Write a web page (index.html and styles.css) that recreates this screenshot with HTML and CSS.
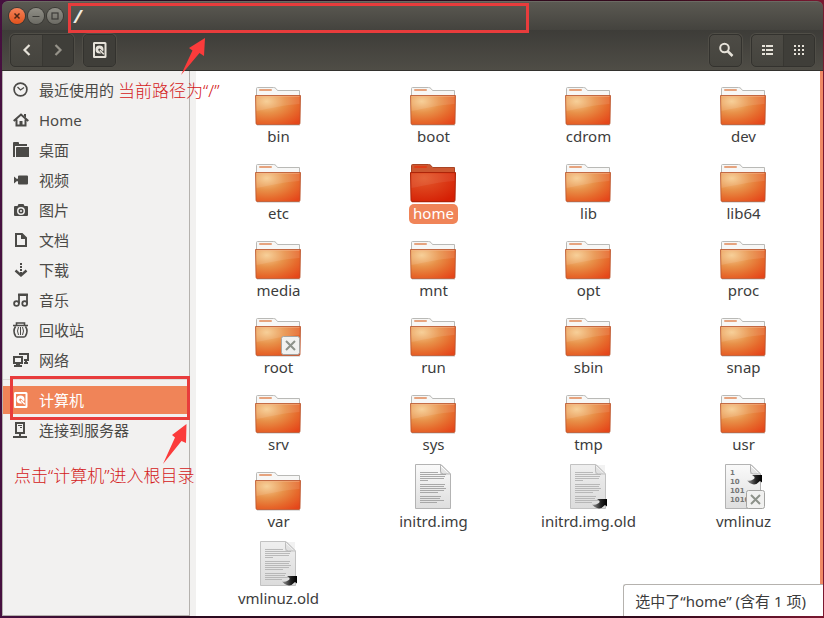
FILE: index.html
```html
<!DOCTYPE html>
<html lang="zh-CN">
<head>
<meta charset="utf-8">
<title>/</title>
<link rel="stylesheet" href="styles.css">
</head>
<body>
<svg class="defs" aria-hidden="true">
  <defs>
    <radialGradient id="orange" cx="0.25" cy="0.2" r="1">
      <stop offset="0" stop-color="#f6cb8e"/>
      <stop offset="0.4" stop-color="#e89149"/>
      <stop offset="0.7" stop-color="#e66a2c"/>
      <stop offset="1" stop-color="#e5461a"/>
    </radialGradient>
    <radialGradient id="red" cx="0.3" cy="0.2" r="0.9">
      <stop offset="0" stop-color="#e2592b"/>
      <stop offset="1" stop-color="#d51f04"/>
    </radialGradient>
    <linearGradient id="paper" x1="0" y1="0" x2="0" y2="1">
      <stop offset="0" stop-color="#fafafa"/>
      <stop offset="1" stop-color="#dedede"/>
    </linearGradient>
    <linearGradient id="link" x1="0" y1="0" x2="1" y2="0">
      <stop offset="0" stop-color="#999"/>
      <stop offset="0.6" stop-color="#222"/>
      <stop offset="1" stop-color="#000"/>
    </linearGradient>
  </defs>
  <symbol id="folder" viewBox="0 0 47 48">
    <path d="M1.500 18V9.500Q1.500 8.500 2.500 8.500H18.500Q20 8.500 21 9.500L22.500 11.500H44.500V18Z" fill="#f7f7f6" stroke="#b9b9b6"/>
    <rect x="4" y="10" width="13" height="2" rx="1" fill="#e6a37e"/>
    <path d="M0.500 16.500H45.500L45 44Q45 45.500 44 45.500H2Q1 45.500 1 44Z" fill="url(#orange)" stroke="#b8532a" stroke-opacity="0.800"/>
    <path d="M1.500 17.500H44.500V25C30 26 17 29 1.500 32Z" fill="#fff" opacity="0.100"/>
    <path d="M1.500 17.500H44.500" stroke="#f6bc92" opacity="0.500"/>
    <path d="M2 46.500H45" stroke="#000" opacity="0.120"/>
  </symbol>
  <symbol id="folder-selected" viewBox="0 0 47 48">
    <path d="M1.500 18V9.500Q1.500 8.500 2.500 8.500H18.500Q20 8.500 21 9.500L22.500 11.500H44.500V18Z" fill="#cc5730" stroke="#a94424"/>
    <rect x="4" y="10" width="13" height="2" rx="1" fill="#e03c15"/>
    <path d="M0.500 16.500H45.500L45 44Q45 45.500 44 45.500H2Q1 45.500 1 44Z" fill="url(#red)" stroke="#ad2409"/>
    <path d="M1.500 17.500H44.500V25C30 26 17 29 1.500 32Z" fill="#fff" opacity="0.070"/>
    <path d="M2 46.500H45" stroke="#d21c00" opacity="0.250"/>
  </symbol>
  <symbol id="page" viewBox="0 0 47 48">
    <path d="M5.500 0.500H31L40.500 10V44.500H5.500Z" fill="url(#paper)" stroke="#b3b3b3"/>
    <path d="M30.500 0.500V7Q30.500 10 33.500 10H40.500Z" fill="#fff" stroke="#b9b9b9"/>
    <path d="M30 2V10H39Z" fill="#999" opacity="0.250"/>
  </symbol>
  <symbol id="lines" viewBox="0 0 47 48">
    <path d="M10 8.500H28M10 10.500H36M10 12.500H35M10 14.500H34M10 16.500H18M10 20.500H35M10 22.500H34M10 24.500H36M10 26.500H34M10 28.500H28M10 32.500H31M10 34.500H30M10 36.500H34M10 38.500H27" stroke="#a0a0a0" stroke-width="0.900"/>
  </symbol>
  <symbol id="shortcut" viewBox="0 0 16 11">
    <path d="M0 6.500Q3 7.500 6 5.500Q8.500 4 7 2.500L5 1H15V8.500L13 7Q9 11.500 5 10Q2 9 0 6.500Z" fill="url(#link)"/>
  </symbol>
  <symbol id="denied" viewBox="0 0 20 20">
    <rect x="0.500" y="0.500" width="18" height="18" rx="2" fill="#f1f1f0" stroke="#a4a4a2"/>
    <path d="M5 5L14 14M14 5L5 14" stroke="#8d928a" stroke-width="2"/>
  </symbol>
  <symbol id="disk" viewBox="0 0 16 16">
    <path fill="currentColor" fill-rule="evenodd" d="M2 0H13Q14.500 0 14.500 1.500V14.500Q14.500 16 13 16H2Q1 16 1 14.500V1.500Q1 0 2 0ZM3 2V14H12.500V2Z"/>
    <path fill="currentColor" d="M7.500 3.500A4 4 0 0 1 11.500 7.500Q11.500 8.700 11 9.500L8.500 7Q7 6 6.300 7.200Q6 8.300 7 9L9.300 11.200Q8.500 11.600 7.500 11.500A4 4 0 0 1 7.500 3.500Z"/>
    <path d="M8 8.200L11.800 12.300" stroke="currentColor" stroke-width="1.500"/>
  </symbol>
</svg>

<div class="window">
  <header class="titlebar">
    <button class="dot close" aria-label="关闭"><svg viewBox="0 0 16 16"><path d="M5.500 5.500L10.500 10.500M10.500 5.500L5.500 10.500" stroke="#4c2616" stroke-width="1.500"/></svg></button>
    <button class="dot" aria-label="最小化"><svg viewBox="0 0 16 16"><path d="M4.500 8.500H11.500" stroke="#3c3b37"/></svg></button>
    <button class="dot" aria-label="最大化"><svg viewBox="0 0 16 16"><rect x="5" y="5" width="6" height="6" fill="none" stroke="#3c3b37" stroke-width="1.200"/></svg></button>
    <h1>/</h1>
    <div class="mark mark-path"></div>
  </header>

  <nav class="toolbar">
    <div class="group">
      <button class="tool" aria-label="后退"><svg viewBox="0 0 16 16"><path d="M10.500 3L5.500 8L10.500 13" fill="none" stroke="currentColor" stroke-width="2.200"/></svg></button>
      <button class="tool pressed dim" aria-label="前进"><svg viewBox="0 0 16 16"><path d="M5.500 3L10.500 8L5.500 13" fill="none" stroke="currentColor" stroke-width="2.200"/></svg></button>
    </div>
    <div class="group">
      <button class="tool pressed" aria-label="计算机"><svg><use href="#disk"/></svg></button>
    </div>
    <div class="group push">
      <button class="tool" aria-label="搜索"><svg viewBox="0 0 16 16"><circle cx="6.500" cy="6" r="4.300" fill="none" stroke="currentColor" stroke-width="2"/><path d="M9.500 9L14.500 14" stroke="currentColor" stroke-width="2.500"/></svg></button>
    </div>
    <div class="group">
      <button class="tool" aria-label="列表视图"><svg viewBox="0 0 16 16"><path fill="currentColor" d="M2 3h3v2H2zM6 3h7v2H6zM2 7h3v2H2zM6 7h7v2H6zM2 11h3v2H2zM6 11h7v2H6z"/></svg></button>
      <button class="tool pressed" aria-label="图标视图"><svg viewBox="0 0 16 16"><path fill="currentColor" d="M3 3h2v2H3zM7 3h2v2H7zM11 3h2v2h-2zM3 7h2v2H3zM7 7h2v2H7zM11 7h2v2h-2zM3 11h2v2H3zM7 11h2v2H7zM11 11h2v2h-2z"/></svg></button>
    </div>
  </nav>

  <div class="body">
    <aside class="sidebar">
      <ul class="places">
        <li><a href="#"><svg viewBox="0 0 16 16"><circle cx="7.500" cy="7.500" r="6.400" fill="none" stroke="currentColor" stroke-width="1.700"/><path d="M4.500 5L7.500 8L11 5.500" fill="none" stroke="currentColor" stroke-width="1.300"/></svg>最近使用的</a></li>
        <li><a href="#"><svg viewBox="0 0 16 16"><path fill="none" stroke="currentColor" stroke-width="2" d="M0.700 9L8 2.500L15.300 9M3.500 7.500V13.500H12.500V7.500"/><path fill="currentColor" d="M6.500 9H9.500V14H6.500ZM11 2h2v4l-2-2z"/></svg>Home</a></li>
        <li><a href="#"><svg viewBox="0 0 16 16"><path fill="currentColor" d="M0 15V1Q0 0 1 0H5Q6 0 6 1V2H14V4H2V15ZM4 5H16V15H3V6Q3 5 4 5Z"/></svg>桌面</a></li>
        <li><a href="#"><svg viewBox="0 0 16 16"><path fill="currentColor" d="M1 4.500L4 7V9L1 11.500ZM6 3.500H14Q15 3.500 15 4.500V11.500Q15 12.500 14 12.500H6Q5 12.500 5 11.500V9.500L4 9V7L5 6.500V4.500Q5 3.500 6 3.500Z"/></svg>视频</a></li>
        <li><a href="#"><svg viewBox="0 0 16 16"><path fill="currentColor" fill-rule="evenodd" d="M5.500 2H10.500L11.500 4H14Q15 4 15 5V13Q15 14 14 14H2Q1 14 1 13V5Q1 4 2 4H4.500ZM8 5A4 4 0 1 0 8 13A4 4 0 1 0 8 5ZM8 6.500A2.500 2.500 0 1 1 8 11.500A2.500 2.500 0 1 1 8 6.500ZM8 8A1 1 0 1 0 8 10A1 1 0 1 0 8 8Z"/></svg>图片</a></li>
        <li><a href="#"><svg viewBox="0 0 16 16"><path fill="none" stroke="currentColor" stroke-width="2" d="M3 2H9L13 6V14H3Z"/><path fill="currentColor" d="M8 1L14 7H8Z"/></svg>文档</a></li>
        <li><a href="#"><svg viewBox="0 0 16 16"><path fill="currentColor" d="M7 1h2v2H7zM7 4h2v2H7zM7 7h2v2H7zM7 10h2v2H7z"/><path fill="none" stroke="currentColor" stroke-width="2.400" d="M2.500 8.500L8 13.500L13.500 8.500"/></svg>下载</a></li>
        <li><a href="#"><svg viewBox="0 0 16 16"><path fill="none" stroke="currentColor" stroke-width="1.800" d="M6 11.500V2.500H14V11.500"/><circle cx="3.500" cy="11.500" r="2.400" fill="none" stroke="currentColor" stroke-width="1.800"/><circle cx="11.700" cy="11.500" r="2.400" fill="none" stroke="currentColor" stroke-width="1.800"/><path d="M5 2H15V4H5Z" fill="currentColor"/></svg>音乐</a></li>
        <li><a href="#"><svg viewBox="0 0 16 16"><path fill="none" stroke="currentColor" stroke-width="1.600" d="M0 3.500H15M3.500 3V1H11.500V3M2.500 4.500Q-0.500 9 2.500 14Q3 15 4 15H11Q12 15 12.500 14Q15.500 9 12.500 4.500"/><path fill="none" stroke="currentColor" d="M5.500 5Q3.500 9 5.500 13M9.500 5Q11.500 9 9.500 13M7.500 5V13"/></svg>回收站</a></li>
        <li><a href="#"><svg viewBox="0 0 16 16"><path fill="none" stroke="currentColor" stroke-width="2" d="M1 5H9V11H1ZM7 3V2H15V8H11"/><path fill="currentColor" d="M3 11h4v2h2v2H1v-2h2zM12 8h2v2h1v2h-4v-2h1z"/></svg>网络</a></li>
      </ul>
      <ul class="places devices">
        <li><a class="current" href="#"><svg><use href="#disk"/></svg>计算机</a></li>
        <li><a href="#"><svg viewBox="0 0 16 16"><path fill="none" stroke="currentColor" stroke-width="2" d="M3 1H11V11H3ZM7 11V15M0 15H14"/><path fill="currentColor" d="M5 3h4v1H5zM7 5h2v1H7z"/></svg>连接到服务器</a></li>
      </ul>
      <div class="mark mark-computer"></div>
    </aside>

    <main class="files">
      <ul class="grid">
        <li><svg><use href="#folder"/></svg><span>bin</span></li>
        <li><svg><use href="#folder"/></svg><span>boot</span></li>
        <li><svg><use href="#folder"/></svg><span>cdrom</span></li>
        <li><svg><use href="#folder"/></svg><span>dev</span></li>
        <li><svg><use href="#folder"/></svg><span>etc</span></li>
        <li class="selected"><svg><use href="#folder-selected"/></svg><span>home</span></li>
        <li><svg><use href="#folder"/></svg><span>lib</span></li>
        <li><svg><use href="#folder"/></svg><span>lib64</span></li>
        <li><svg><use href="#folder"/></svg><span>media</span></li>
        <li><svg><use href="#folder"/></svg><span>mnt</span></li>
        <li><svg><use href="#folder"/></svg><span>opt</span></li>
        <li><svg><use href="#folder"/></svg><span>proc</span></li>
        <li><svg><use href="#folder"/><use href="#denied" x="26" y="26" width="20" height="20"/></svg><span>root</span></li>
        <li><svg><use href="#folder"/></svg><span>run</span></li>
        <li><svg><use href="#folder"/></svg><span>sbin</span></li>
        <li><svg><use href="#folder"/></svg><span>snap</span></li>
        <li><svg><use href="#folder"/></svg><span>srv</span></li>
        <li><svg><use href="#folder"/></svg><span>sys</span></li>
        <li><svg><use href="#folder"/></svg><span>tmp</span></li>
        <li><svg><use href="#folder"/></svg><span>usr</span></li>
        <li><svg><use href="#folder"/></svg><span>var</span></li>
        <li><svg><use href="#page"/><use href="#lines"/></svg><span>initrd.img</span></li>
        <li><svg><g opacity="0.800"><use href="#page"/><path d="M6 1H40V44H6Z" fill="#999" opacity="0.150"/><use href="#lines"/></g><use href="#shortcut" x="27" y="34" width="16" height="11"/></svg><span>initrd.img.old</span></li>
        <li><svg class="binary"><use href="#page"/><text x="10" y="11">1</text><text x="10" y="20">10</text><text x="10" y="29">101</text><text x="10" y="38">1010</text><use href="#shortcut" x="27" y="10" width="16" height="11"/><use href="#denied" x="26" y="26" width="20" height="20"/></svg><span>vmlinuz</span></li>
        <li><svg><g opacity="0.800"><use href="#page"/><path d="M6 1H40V44H6Z" fill="#999" opacity="0.150"/><use href="#lines"/></g><use href="#shortcut" x="27" y="34" width="16" height="11"/></svg><span>vmlinuz.old</span></li>
      </ul>
      <div class="scrollbar"></div>
      <div class="status">选中了“home” (含有 1 项)</div>
    </main>
  </div>

  <p class="note note-path">当前路径为“/”</p>
  <svg class="arrow arrow-path" viewBox="0 0 26 40"><path d="M25 1L9 11L12.500 13.500L1 38L19.500 16L24 19Z"/></svg>
  <p class="note note-computer">点击“计算机”进入根目录</p>
  <svg class="arrow arrow-computer" viewBox="0 0 26 42"><path d="M24.500 1L10 12L13 14.500L1 41L19.500 18L24 20Z"/></svg>
</div>
</body>
</html>
```

FILE: styles.css
```css
* {
  box-sizing: border-box;
}

body {
  margin: 0;
  min-height: 100vh;
  padding: 1px 1px 2px 2px;
  display: flex;
  background: linear-gradient(90deg, #46103f, #2b0a20 20%, #33091c 80%, #7a1830);
  font: 15px/20px "Noto Sans", "Noto Sans CJK SC", sans-serif;
  color: #3c3c3c;
}

ul,
h1,
p {
  margin: 0;
  padding: 0;
  list-style: none;
}

button {
  padding: 0;
  border: 0;
  background: none;
  color: inherit;
}

svg {
  display: block;
  flex: none;
  width: 16px;
  height: 16px;
}

.defs {
  position: absolute;
  width: 0;
  height: 0;
}

.window {
  position: relative;
  flex: 1;
  display: flex;
  flex-direction: column;
}

/* Title bar */

.titlebar {
  position: relative;
  display: flex;
  align-items: center;
  gap: 3px;
  height: 29px;
  padding: 0 7px;
  border-radius: 6px 6px 0 0;
  border-top: 1px solid #6b6a63;
  background: linear-gradient(#5b5952, #44433e);
}

.titlebar h1 {
  margin-left: 8px;
  font-size: 18px;
  line-height: 20px;
  font-style: italic;
  color: #f0ece2;
}

.dot {
  width: 16px;
  height: 16px;
  border-radius: 50%;
  background: linear-gradient(#908f87, #6c6b64);
  box-shadow: 0 0 0 1px #3a3935;
}

.dot.close {
  background: linear-gradient(#f58259, #e2521c);
}

/* Toolbar */

.toolbar {
  display: flex;
  align-items: center;
  gap: 9px;
  height: 41px;
  padding: 0 8px;
  border-bottom: 1px solid #33322e;
  background: linear-gradient(#3d3c38, #4f4d46);
  color: #e6e2d9;
}

.group {
  display: flex;
  border: 1px solid #33322e;
  border-radius: 5px;
  overflow: hidden;
  background: linear-gradient(#4d4b45, #45443e);
  box-shadow: 0 0 0 1px #504e47;
}

.push {
  margin-left: auto;
}

.tool {
  display: grid;
  place-items: center;
  width: 31px;
  height: 31px;
}

.tool + .tool {
  border-left: 1px solid #383732;
}

.tool.pressed {
  background: #3f3e39;
}

.tool.dim {
  color: #96938a;
}

/* Sidebar */

.body {
  flex: 1;
  display: flex;
}

.sidebar {
  position: relative;
  width: 188px;
  padding-top: 4px;
  border: 1px solid #b5b2ae;
  border-top: 0;
  background: #f2f1f0;
}

.places a {
  display: flex;
  align-items: center;
  gap: 10px;
  height: 28px;
  margin: 1px 0;
  padding-left: 10px;
  color: #4b4a47;
  text-decoration: none;
}

.places li {
  display: flow-root;
}

.devices {
  margin-top: 4px;
  padding-top: 5px;
  border-top: 1px solid #dddbd8;
}

.places a.current {
  background: #f08458;
  color: #fff;
}

/* File area */

.files {
  position: relative;
  flex: 1;
  padding: 8px 0 0 5px;
  border-left: 6px solid #f2f1f0;
  background: #fff;
}

.grid {
  display: grid;
  grid-template-columns: repeat(auto-fill, 155px);
  row-gap: 9px;
}

.grid li {
  display: flex;
  flex-direction: column;
  align-items: center;
}

.grid svg {
  width: 47px;
  height: 48px;
}

.grid span {
  padding: 0 4px 2px;
  border-radius: 5px;
  line-height: 18px;
}

.selected span {
  background: #f08458;
  color: #fff;
}

.binary text {
  font: bold 7px "DejaVu Sans", sans-serif;
  fill: #777;
}

.scrollbar {
  position: absolute;
  top: 0;
  right: 0;
  bottom: 0;
  width: 3px;
  background: #f08b66;
}

.status {
  position: absolute;
  right: 0;
  bottom: 0;
  padding: 6px 17px 5px 11px;
  border: 1px solid #b5b2ae;
  border-width: 1px 0 0 1px;
  border-radius: 3px 0 0 0;
  background: #fff;
}

/* Annotations */

.mark {
  position: absolute;
  border: 3px solid #e83c3c;
}

.mark-path {
  left: 66px;
  top: 1px;
  width: 461px;
  height: 30px;
}

.mark-computer {
  inset: 305px -1px auto 7px;
  height: 44px;
}

.note {
  position: absolute;
  font-size: 17px;
  font-weight: 300;
  line-height: 24px;
  color: #d42020;
  white-space: nowrap;
}

.note-path {
  left: 116px;
  top: 78px;
}

.note-computer {
  left: 12px;
  top: 463px;
}

.arrow {
  position: absolute;
  fill: #fb3b3b;
}

.arrow-path {
  left: 178px;
  top: 36px;
  width: 26px;
  height: 40px;
}

.arrow-computer {
  left: 160px;
  top: 422px;
  width: 26px;
  height: 42px;
}
```
